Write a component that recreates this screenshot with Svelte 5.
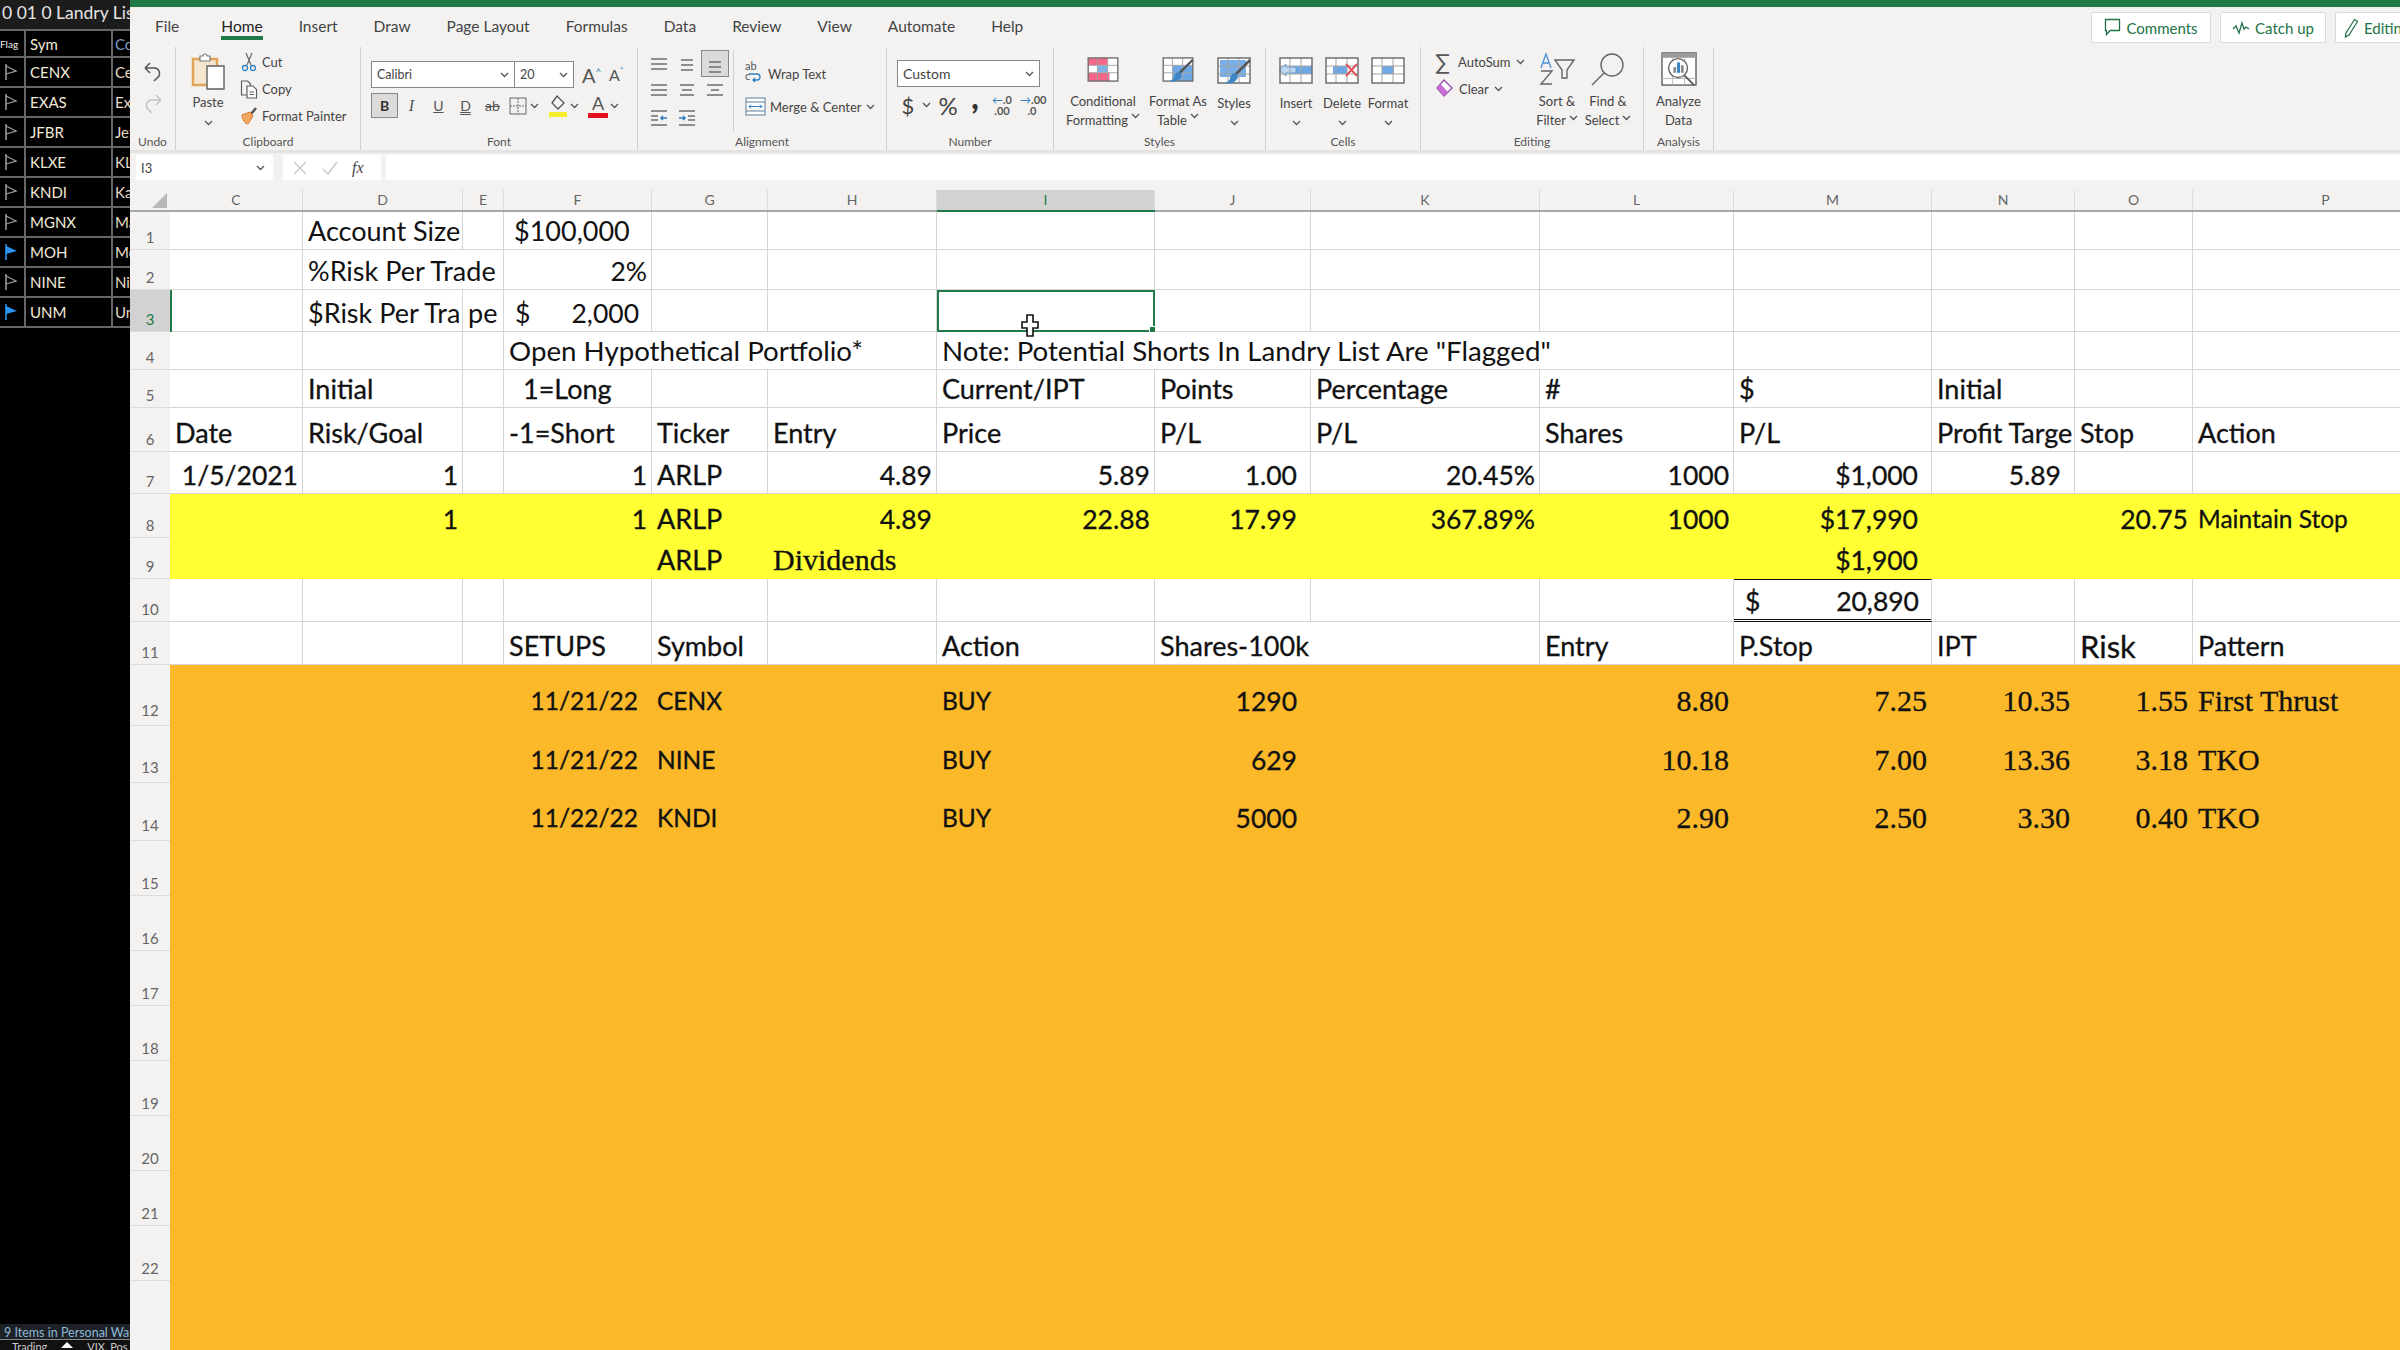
<script>
  const watch = [
    ["CENX", "Century", false],
    ["EXAS", "Exact", false],
    ["JFBR", "Jeffs", false],
    ["KLXE", "KLX", false],
    ["KNDI", "Kandi", false],
    ["MGNX", "Macro", false],
    ["MOH", "Molina", true],
    ["NINE", "Nine", false],
    ["UNM", "Unum", true],
  ];

  const tabs = ["File", "Home", "Insert", "Draw", "Page Layout", "Formulas", "Data", "Review", "View", "Automate", "Help"];
  const cols = "CDEFGHIJKLMNOP".split("");

  // cell helpers: left text, right text, accounting format
  const l = (t, cls = "", span = 1) => ({ t, cls, span });
  const r = (t, cls = "", span = 1) => ({ t, cls: "right " + cls, span });
  const acct = (t, cls = "") => ({ a: "$", t, cls: "acct " + cls, span: 1 });

  const rows = [
    { n: 1, h: 38, cells: { D: l("Account Size"), F: l("$100,000", "in") } },
    { n: 2, h: 40, cells: { D: l("%Risk Per Trade", "", 2), F: r("2%") } },
    { n: 3, h: 42, sel: true, cells: { D: l("$Risk Per Tra"), E: l("pe", "tight"), F: acct("2,000"), I: { t: "", cls: "active", span: 1 } } },
    { n: 4, h: 38, cells: { F: l("Open Hypothetical Portfolio*", "note", 3), I: l("Note: Potential Shorts In Landry List Are \"Flagged\"", "note", 4) } },
    { n: 5, h: 38, cls: "heavy", cells: { D: l("Initial"), F: l("1=Long", "in2"), I: l("Current/IPT"), J: l("Points"), K: l("Percentage"), L: l("#"), M: l("$"), N: l("Initial") } },
    { n: 6, h: 44, cls: "heavy", cells: { C: l("Date"), D: l("Risk/Goal"), F: l("-1=Short"), G: l("Ticker"), H: l("Entry"), I: l("Price"), J: l("P/L"), K: l("P/L"), L: l("Shares"), M: l("P/L"), N: l("Profit Targe"), O: l("Stop"), P: l("Action") } },
    { n: 7, h: 42, cls: "heavy", cells: { C: r("1/5/2021"), D: r("1"), F: r("1"), G: l("ARLP"), H: r("4.89"), I: r("5.89"), J: r("1.00", "pad"), K: r("20.45%"), L: r("1000"), M: r("$1,000", "pad"), N: r("5.89", "pad") } },
    { n: 8, h: 44, cls: "heavy yellow", cells: { D: r("1"), F: r("1"), G: l("ARLP"), H: r("4.89"), I: r("22.88"), J: r("17.99", "pad"), K: r("367.89%"), L: r("1000"), M: r("$17,990", "pad"), O: r("20.75"), P: l("Maintain Stop", "small") } },
    { n: 9, h: 41, cls: "heavy yellow", cells: { G: l("ARLP"), H: l("Dividends", "serif"), M: r("$1,900", "pad") } },
    { n: 10, h: 43, cls: "heavy", cells: { M: acct("20,890", "total") } },
    { n: 11, h: 43, cls: "heavy", cells: { F: l("SETUPS"), G: l("Symbol"), I: l("Action"), J: l("Shares-100k", "", 2), L: l("Entry"), M: l("P.Stop"), N: l("IPT"), O: l("Risk", "big"), P: l("Pattern") } },
    { n: 12, h: 61, cls: "heavy orange setup", cells: { F: r("11/21/22", "pad"), G: l("CENX"), I: l("BUY"), J: r("1290", "pad qty"), L: r("8.80", "serif"), M: r("7.25", "serif"), N: r("10.35", "serif"), O: r("1.55", "serif"), P: l("First Thrust", "serif") } },
    { n: 13, h: 57, cls: "heavy orange setup", cells: { F: r("11/21/22", "pad"), G: l("NINE"), I: l("BUY"), J: r("629", "pad qty"), L: r("10.18", "serif"), M: r("7.00", "serif"), N: r("13.36", "serif"), O: r("3.18", "serif"), P: l("TKO", "serif") } },
    { n: 14, h: 58, cls: "heavy orange setup", cells: { F: r("11/22/22", "pad"), G: l("KNDI"), I: l("BUY"), J: r("5000", "pad qty"), L: r("2.90", "serif"), M: r("2.50", "serif"), N: r("3.30", "serif"), O: r("0.40", "serif"), P: l("TKO", "serif") } },
    ...[15, 16, 17, 18, 19, 20, 21, 22].map((n) => ({ n, h: 55, cls: "orange", cells: {} })),
    { n: "", h: 71, cls: "orange last", cells: {} },
  ];

  // fill the gaps so every row has its full run of columns
  function expand(cells) {
    const out = [];
    for (let i = 0; i < cols.length; i++) {
      const c = cells[cols[i]] || { t: "", cls: "", span: 1 };
      out.push(c);
      i += c.span - 1;
    }
    return out;
  }
</script>

{#snippet chev()}
  <svg class="chev" width="9" height="6" viewBox="0 0 9 6"><path d="M1 1l3.500 3.500L8 1" fill="none" stroke="#555" stroke-width="1.300"/></svg>
{/snippet}

{#snippet lines(a, b, c, top)}
  <svg width="22" height="20" viewBox="0 0 22 20" fill="none" stroke="#6d6d6d" stroke-width="1.600">
    <path d="M{a} {top}H{22 - a}M{b} {top + 5}H{22 - b}M{c} {top + 10}H{22 - c}"/>
  </svg>
{/snippet}

{#snippet sheet(fill1, fill2)}
  <svg width="34" height="27" viewBox="0 0 34 27" fill="none">
    <rect x="1" y="1" width="32" height="25" fill="#fff"/>
    {@render fill1()}
    <path d="M1 9H33M1 17H33M11 1V26M22 1V26" stroke="#a5a5a5"/>
    <rect x="1" y="1" width="32" height="25" stroke="#6f6f6f" stroke-width="1.500"/>
    {#if fill2}{@render fill2()}{/if}
  </svg>
{/snippet}

{#snippet condFill()}
  <path d="M1 1h21v8H1zM1 17h23v9H1z" fill="#f4668a"/><path d="M11 9h11v8H11z" fill="#7fb2e5"/>
{/snippet}
{#snippet tableFill()}
  <path d="M11 9h22v17H11z" fill="#6ea8e4"/>
{/snippet}
{#snippet styleFill()}
  <path d="M3 3h26v17H3z" fill="#78aee8"/>
{/snippet}
{#snippet brush()}
  <path d="M33 3L18 18" stroke="#555" stroke-width="2.500"/><path d="M19 16c-4 0-6 3-6 6-1 2-3 3-5 4 5 1 11 0 13-6z" fill="#3f86c6"/>
{/snippet}
{#snippet insFill()}
  <path d="M11 9h22v8H11z" fill="#6ea8e4"/><path d="M0 13l7-6v3h10v6H7v3z" fill="#bcd8f2" stroke="#5a9bd8"/>
{/snippet}
{#snippet delFill()}
  <path d="M8 9h14v8H8z" fill="#6ea8e4"/>
{/snippet}
{#snippet delX()}
  <path d="M21 7l11 12M32 7L21 19" stroke="#e0515a" stroke-width="2"/>
{/snippet}
{#snippet fmtFill()}
  <path d="M11 9h12v8H11z" fill="#6ea8e4"/>
{/snippet}

<div class="screen">
  <aside class="watch">
    <div class="title">0 01 0 Landry List</div>
    <div class="wrow head"><span class="flag small-flag">Flag</span><span class="sym">Sym</span><span class="co blue">Company</span></div>
    {#each watch as [sym, co, on]}
      <div class="wrow">
        <span class="flag">
          <svg width="14" height="18" viewBox="0 0 14 18">
            <path d="M2 1v16" stroke={on ? "#2a95f0" : "#9a9a9a"} stroke-width="1.600"/>
            {#if on}<path d="M2 3l11 5-11 3z" fill="#2a95f0"/>{:else}<path d="M2 3l10 5-10 3" fill="none" stroke="#9a9a9a" stroke-width="1.300"/>{/if}
          </svg>
        </span>
        <span class="sym">{sym}</span>
        <span class="co">{co}</span>
      </div>
    {/each}
    <div class="spacer"></div>
    <div class="foot">9 Items in Personal Watchlist</div>
    <div class="foot2"><span>Trading</span><i></i><span>VIX, Pos</span></div>
  </aside>

  <main class="excel">
    <div class="greenbar"></div>
    <div class="tabs">
      {#each tabs as tab}
        <span class="tab" class:current={tab === "Home"} class:file={tab === "File"}>{tab}</span>
      {/each}
      <div class="actions">
        <button>
          <svg width="17" height="19" viewBox="0 0 17 19" fill="none" stroke="#217346" stroke-width="1.300"><path d="M1.500 1.500h14v11H6l-3.500 4v-4h-1z"/></svg>
          Comments
        </button>
        <button>
          <svg width="18" height="14" viewBox="0 0 18 14" fill="none" stroke="#217346" stroke-width="1.300"><path d="M1 8l3-3 3 7 3-10 2 6 2-2 3 2"/></svg>
          Catch up
        </button>
        <button class="edit">
          <svg width="15" height="20" viewBox="0 0 15 20" fill="none" stroke="#217346" stroke-width="1.200"><path d="M10.500 1.500l3 2L5 17l-3.500 2 .5-4z"/></svg>
          Editing
        </button>
      </div>
    </div>

    <div class="ribbon">
      <section class="group g-undo">
        <div class="body undo">
          <svg width="20" height="22" viewBox="0 0 20 22" fill="none" stroke="#555" stroke-width="1.500"><path d="M2 8h10a5.500 5.500 0 0 1 2 10l-3 3M2 8l5-5M2 8l5 5"/></svg>
          <svg width="20" height="22" viewBox="0 0 20 22" fill="none" stroke="#c4c4c4" stroke-width="1.500"><path d="M18 8H8a5.500 5.500 0 0 0-2 10l3 3M18 8l-5-5M18 8l-5 5"/></svg>
        </div>
        <div class="label">Undo</div>
      </section>

      <section class="group g-clip">
        <div class="body clip">
          <div class="paste">
            <svg width="34" height="38" viewBox="0 0 34 38" fill="none">
              <path d="M2 7h24v26H2z" fill="#f6e6d0" stroke="#e0a458" stroke-width="2.500"/>
              <path d="M9 7V4h3a2 2 0 0 1 4 0h3v5H9z" fill="#fff" stroke="#7b7b7b" stroke-width="1.200"/>
              <path d="M16 14h17v23H16z" fill="#fff" stroke="#5f5f5f" stroke-width="1.400"/>
            </svg>
            <span>Paste</span>
            {@render chev()}
          </div>
          <div class="cliplist">
            <div>
              <svg width="18" height="20" viewBox="0 0 18 20" fill="none"><path d="M6 1l5 12M12 1L7 13" stroke="#666" stroke-width="1.200"/><circle cx="5" cy="16" r="2.500" stroke="#2f7fc1" stroke-width="1.300"/><circle cx="13" cy="16" r="2.500" stroke="#2f7fc1" stroke-width="1.300"/></svg>
              Cut
            </div>
            <div>
              <svg width="18" height="20" viewBox="0 0 18 20" fill="none" stroke="#5f5f5f" stroke-width="1.200"><path d="M1.500 2h6l3 3v11h-9z"/><path d="M7 7h6l3.500 3.500V19H7z" fill="#fff"/><path d="M9.500 13h4.500M9.500 15.500h4.500"/></svg>
              Copy
            </div>
            <div>
              <svg width="18" height="20" viewBox="0 0 18 20" fill="none"><path d="M11 8l5-6" stroke="#555" stroke-width="2.500"/><path d="M2 9l8-3 3 4-5 8c-3 0-6-5-6-9z" fill="#f3a75f" stroke="#d9792b"/></svg>
              Format Painter
            </div>
          </div>
        </div>
        <div class="label">Clipboard</div>
      </section>

      <section class="group g-font">
        <div class="body font">
          <div class="fontrow">
            <div class="select name">Calibri {@render chev()}</div>
            <div class="select size">20 {@render chev()}</div>
            <span class="grow">A<sup>^</sup></span>
            <span class="grow shrink">A<sup>ˇ</sup></span>
          </div>
          <div class="fontrow second">
            <span class="bold">B</span>
            <span class="fb ital">I</span>
            <span class="fb und">U</span>
            <span class="fb dbl">D</span>
            <span class="fb strike">ab</span>
            <svg class="borders" width="18" height="18" viewBox="0 0 18 18" fill="none" stroke="#666"><rect x="1" y="1" width="16" height="16"/><path d="M9 1v16M1 9h16" stroke-dasharray="2 1"/></svg>
            {@render chev()}
            <svg class="fill" width="20" height="24" viewBox="0 0 20 24" fill="none"><path d="M9 2l7 7-6 6-6-6z" stroke="#555" stroke-width="1.300"/><path d="M1 18h18v5H1z" fill="#f7ee2f"/></svg>
            {@render chev()}
            <span class="fcolor">A</span>
            {@render chev()}
          </div>
        </div>
        <div class="label">Font</div>
      </section>

      <section class="group g-align">
        <div class="body align">
          <div class="aligns">
            <span>{@render lines(3, 3, 3, 5)}</span>
            <span>{@render lines(5, 5, 5, 6)}</span>
            <span class="on">{@render lines(5, 5, 5, 8)}</span>
            <span>{@render lines(3, 3, 3, 4)}</span>
            <span>{@render lines(4, 6, 4, 4)}</span>
            <span>{@render lines(3, 7, 3, 4)}</span>
            <span><svg width="22" height="20" viewBox="0 0 22 20" fill="none" stroke="#6d6d6d" stroke-width="1.500"><path d="M3 3h16M3 8h7M3 12h7M3 17h16"/><path d="M19 10h-6m2-2l-2 2 2 2" stroke="#2f7fc1"/></svg></span>
            <span><svg width="22" height="20" viewBox="0 0 22 20" fill="none" stroke="#6d6d6d" stroke-width="1.500"><path d="M3 3h16M12 8h7M12 12h7M3 17h16"/><path d="M3 10h6m-2-2l2 2-2 2" stroke="#2f7fc1"/></svg></span>
          </div>
          <div class="wraps">
            <div><svg width="19" height="20" viewBox="0 0 19 20" fill="none"><path d="M4 10h8a3 3 0 0 1 0 6H8m2-2l-2 2 2 2" stroke="#2f7fc1" stroke-width="1.300"/></svg><span class="abc">ab<br>c</span>Wrap Text</div>
            <div><svg width="21" height="19" viewBox="0 0 21 19" fill="none"><rect x="1" y="1" width="19" height="17" fill="#fff" stroke="#5f7d95"/><path d="M1 5h19M1 14h19" stroke="#5f7d95"/><path d="M4 9.500h13M6 7.500l-2 2 2 2M15 7.500l2 2-2 2" stroke="#2f7fc1"/></svg>Merge &amp; Center {@render chev()}</div>
          </div>
        </div>
        <div class="label">Alignment</div>
      </section>

      <section class="group g-num">
        <div class="body num">
          <div class="select custom">Custom {@render chev()}</div>
          <div class="numrow">
            <span class="dollar">$</span>
            {@render chev()}
            <span class="pct">%</span>
            <span class="comma">,</span>
            <span class="dec"><b class="ar">←</b>.0<br>.00</span>
            <span class="dec second"><b class="ar">→</b>.00<br>.0</span>
          </div>
        </div>
        <div class="label">Number</div>
      </section>

      <section class="group g-styles">
        <div class="body bigs">
          <div class="bigbtn w90">{@render sheet(condFill)}<span>Conditional</span><span>Formatting {@render chev()}</span></div>
          <div class="bigbtn w60">{@render sheet(tableFill, brush)}<span>Format As</span><span>Table {@render chev()}</span></div>
          <div class="bigbtn w52">{@render sheet(styleFill, brush)}<span>Styles</span>{@render chev()}</div>
        </div>
        <div class="label">Styles</div>
      </section>

      <section class="group g-cells">
        <div class="body bigs">
          <div class="bigbtn w46">{@render sheet(insFill)}<span>Insert</span>{@render chev()}</div>
          <div class="bigbtn w46">{@render sheet(delFill, delX)}<span>Delete</span>{@render chev()}</div>
          <div class="bigbtn w46">{@render sheet(fmtFill)}<span>Format</span>{@render chev()}</div>
        </div>
        <div class="label">Cells</div>
      </section>

      <section class="group g-edit">
        <div class="body edits">
          <div class="editlist">
            <div><span class="sigma">∑</span>AutoSum {@render chev()}</div>
            <div>
              <svg width="19" height="19" viewBox="0 0 19 19"><path d="M9 1l8 8-8 8-7-8z" fill="#fff" stroke="#9b4fb3" stroke-width="1.400"/><path d="M5.500 5L2 9l7 8 4-4z" fill="#c66fd6"/></svg>
              Clear {@render chev()}
            </div>
          </div>
          <div class="bigbtn w50 tall">
            <svg width="38" height="34" viewBox="0 0 38 34" fill="none"><path d="M3 16L8 2l5 14M5 11h6" stroke="#4c95d6" stroke-width="1.400"/><path d="M3 19h11L3 32h11" stroke="#666" stroke-width="1.400"/><path d="M17 8h19l-7 10v8h-5v-8z" stroke="#666" stroke-width="1.400"/></svg>
            <span>Sort &amp;</span><span>Filter {@render chev()}</span>
          </div>
          <div class="bigbtn w52 tall">
            <svg width="36" height="34" viewBox="0 0 36 34" fill="none" stroke="#666" stroke-width="1.400"><circle cx="22" cy="13" r="11"/><path d="M14 21L2 33"/></svg>
            <span>Find &amp;</span><span>Select {@render chev()}</span>
          </div>
        </div>
        <div class="label">Editing</div>
      </section>

      <section class="group g-ana">
        <div class="body bigs">
          <div class="bigbtn w70 tall">
            <svg width="38" height="36" viewBox="0 0 38 36" fill="none">
              <rect x="1" y="1" width="36" height="34" fill="#fff" stroke="#555" stroke-width="1.400"/>
              <path d="M1 1h36v5H1z" fill="#9a9a9a"/>
              <path d="M1 28h36M12 6v29M25 6v29" stroke="#b5b5b5"/>
              <circle cx="18" cy="17" r="10" fill="#fff" stroke="#666" stroke-width="1.500"/>
              <path d="M13 16h3v6h-3z" fill="#8a8a8a"/><path d="M17 11h3v11h-3z" fill="#2f7fc1"/><path d="M21 14h3v8h-3z" fill="#8a8a8a"/>
              <path d="M25 25l10 10" stroke="#555" stroke-width="1.800"/>
            </svg>
            <span>Analyze</span><span>Data</span>
          </div>
        </div>
        <div class="label">Analysis</div>
      </section>
    </div>

    <div class="formula">
      <div class="namebox">I3 {@render chev()}</div>
      <div class="fxbox">
        <svg width="16" height="16" viewBox="0 0 16 16" fill="none" stroke="#c8c8c8" stroke-width="1.400"><path d="M2 2l12 12M14 2L2 14"/></svg>
        <svg width="16" height="16" viewBox="0 0 16 16" fill="none" stroke="#c8c8c8" stroke-width="1.400"><path d="M1 9l5 5L15 2"/></svg>
        <span>fx</span>
      </div>
      <div class="input"></div>
    </div>

    <div class="sheetgrid">
      <div class="line colheads">
        <div class="corner"><i></i></div>
        {#each cols as c}<div class="colhead" class:sel={c === "I"}>{c}</div>{/each}
      </div>
      {#each rows as row}
        <div class="line {row.cls || ''}" style="height:{row.h}px">
          <div class="rowhead" class:sel={row.sel}>{row.n}</div>
          {#each expand(row.cells) as cell}
            <div class="cell {cell.cls}" style="grid-column:span {cell.span}">
              {#if cell.a}<span>{cell.a}</span>{/if}
              <span class="txt">{cell.t}</span>
              {#if cell.cls === "active"}
                <i class="handle"></i>
                <svg class="cursor" width="18" height="24" viewBox="0 0 18 24"><path d="M6 1h6v7h5v6h-5v8H6v-8H1V8h5z" fill="#fff" stroke="#111" stroke-width="1.600"/></svg>
              {/if}
            </div>
          {/each}
        </div>
      {/each}
    </div>
  </main>
</div>

<style>
  :global(body) { margin: 0; background: #000; overflow: hidden; }

  .screen { display: flex; width: 2400px; height: 1350px; overflow: hidden; font-family: Lato, "Liberation Sans", sans-serif; }

  /* watchlist */
  .watch { width: 130px; flex: none; background: #000; color: #eee; display: flex; flex-direction: column; overflow: hidden; white-space: nowrap; }
  .title { height: 29px; line-height: 26px; padding-left: 2px; background: #1c1c1c; font-size: 17.500px; color: #e4e4e4; }
  .wrow { display: grid; grid-template-columns: 26px 87px 17px; height: 30px; border-top: 2px solid #666; box-sizing: border-box; align-items: center; font-size: 15px; flex: none; }
  .wrow.head { height: 27px; }
  .wrow span { height: 100%; display: flex; align-items: center; overflow: hidden; }
  .flag { border-right: 2px solid #666; padding-left: 4px; box-sizing: border-box; }
  .small-flag { font-size: 10px; padding-left: 0; }
  .sym { border-right: 2px solid #666; padding-left: 4px; box-sizing: border-box; color: #f2ead8; }
  .co { padding-left: 2px; color: #e8dcc8; }
  .co.blue { color: #7f9cc0; }
  .spacer { flex: 1; border-top: 2px solid #666; }
  .foot { height: 15px; line-height: 17px; font-size: 12.500px; padding-left: 4px; background: #1e2226; color: #8db8d8; }
  .foot2 { height: 10px; border-top: 1px solid #888; background: #111; font-size: 11px; display: flex; gap: 14px; padding-left: 12px; color: #ccc; overflow: hidden; }
  .foot2 i { width: 0; height: 0; border: 6px solid transparent; border-bottom-color: #fff; margin-top: -4px; }

  /* excel chrome */
  .excel { flex: 1; min-width: 0; background: #f3f2f1; display: flex; flex-direction: column; color: #444; }
  .greenbar { height: 7px; background: #1f7a47; flex: none; }
  .tabs { height: 40px; flex: none; display: flex; gap: 36px; padding-left: 25px; font-size: 15.500px; align-items: flex-start; position: relative; overflow: hidden; }
  .tab { height: 33px; line-height: 38px; box-sizing: content-box; position: relative; color: #444; }
  .tab.file { margin-right: 6px; }
  .tab.current { color: #222; border-bottom: 4px solid #1f7a47; height: 29px; line-height: 38px; }
  .actions { margin-left: auto; margin-right: -35px; display: flex; gap: 9px; margin-top: 5px; }
  .actions button { height: 31px; padding: 0 8px; width: 120px; box-sizing: border-box; border: 1px solid #dcdad8; border-radius: 2px; background: #fff; color: #217346; font: 15px Lato, sans-serif; display: flex; align-items: center; gap: 5px; justify-content: center; }
  .actions button:nth-child(2) { width: 106px; }
  .actions .edit { width: 100px; justify-content: flex-start; }

  .ribbon { height: 106px; flex: none; display: flex; font-size: 13px; border-bottom: 3px solid #e4e3e1; box-sizing: border-box; }
  .group { box-sizing: border-box; border-right: 1px solid #d2d0ce; display: flex; flex-direction: column; height: 103px; }
  .g-undo { width: 46px; } .g-clip { width: 185px; } .g-font { width: 277px; } .g-align { width: 249px; }
  .g-num { width: 167px; } .g-styles { width: 212px; } .g-cells { width: 155px; } .g-edit { width: 223px; } .g-ana { width: 70px; }
  .body { flex: 1; display: flex; min-height: 0; }
  .label { height: 20px; line-height: 24px; text-align: center; font-size: 12px; color: #555; }
  .chev { flex: none; }

  .undo { flex-direction: column; align-items: center; padding-top: 13px; gap: 10px; }

  .paste { width: 64px; display: flex; flex-direction: column; align-items: center; padding-top: 5px; gap: 4px; }
  .paste .chev { margin-top: 6px; }
  .cliplist { display: flex; flex-direction: column; padding-top: 1px; }
  .cliplist div { height: 27px; display: flex; align-items: center; gap: 4px; }

  .font { flex-direction: column; padding: 14px 0 0 10px; }
  .fontrow { display: flex; align-items: center; height: 27px; }
  .fontrow.second { margin-top: 5px; height: 25px; }
  .select { height: 27px; box-sizing: border-box; background: #fff; border: 1px solid #8a8886; display: flex; align-items: center; justify-content: space-between; padding: 0 5px; font-size: 12.500px; }
  .select.name { width: 144px; }
  .select.size { width: 59px; border-left: 0; }
  .grow { font-size: 20px; margin-left: 8px; color: #555; width: 18px; }
  .grow.shrink { font-size: 16px; margin-left: 9px; }
  .grow sup { font-size: 10px; color: #2f7fc1; }
  .bold { width: 27px; height: 25px; box-sizing: border-box; background: #dcdbd9; border: 1px solid #8a8886; text-align: center; font-weight: 700; line-height: 23px; font-size: 14px; color: #333; }
  .fb { width: 27px; text-align: center; font-size: 14px; color: #555; }
  .fb.ital { font-family: "Liberation Serif", serif; font-style: italic; font-size: 16px; }
  .fb.und { text-decoration: underline; }
  .fb.dbl { text-decoration: underline double; }
  .fb.strike { text-decoration: line-through; }
  .borders { margin: 0 3px 0 3px; }
  .fill { margin: 0 2px 0 9px; }
  .fcolor { margin-left: 9px; width: 20px; text-align: center; font-size: 18px; line-height: 20px; border-bottom: 5px solid #e8101f; margin-right: 2px; color: #555; }

  .align { padding-left: 7px; }
  .aligns { width: 84px; height: 82px; margin-top: 3px; display: grid; grid-template-columns: repeat(3, 28px); grid-auto-rows: 27px; border-right: 1px solid #d2d0ce; padding-right: 4px; }
  .aligns span { display: flex; align-items: center; justify-content: center; box-sizing: border-box; }
  .aligns .on { background: #dcdbd9; border: 1px solid #8a8886; }
  .wraps { padding: 10px 0 0 11px; }
  .wraps div { height: 33px; display: flex; align-items: center; gap: 4px; position: relative; }
  .abc { position: absolute; left: 0; top: 4px; font-size: 11px; line-height: 10px; color: #555; }

  .num { flex-direction: column; padding: 13px 0 0 10px; }
  .select.custom { width: 143px; font-size: 14px; }
  .numrow { display: flex; align-items: center; height: 36px; }
  .dollar { font-size: 22px; width: 22px; text-align: center; }
  .numrow .chev { margin: 0 5px 0 3px; }
  .pct { font-size: 24px; width: 24px; text-align: center; }
  .comma { font-size: 32px; line-height: 20px; font-weight: 900; width: 30px; text-align: center; transform: translateY(-8px); color: #333; }
  .dec { font-size: 11px; line-height: 11px; width: 24px; font-weight: 700; text-align: center; color: #555; }
  .dec.second { margin-left: 6px; }
  .ar { color: #2f7fc1; font-weight: 400; }

  .bigs { padding-left: 4px; }
  .g-cells .bigs { padding-left: 7px; }
  .g-ana .bigs { padding-left: 0; }
  .bigbtn { display: flex; flex-direction: column; align-items: center; padding-top: 10px; }
  .bigbtn.tall { padding-top: 5px; }
  .bigbtn svg:first-child { margin-bottom: 10px; }
  .bigbtn.tall svg:first-child { margin-bottom: 6px; }
  .bigbtn span { line-height: 19px; white-space: nowrap; display: flex; align-items: center; gap: 3px; }
  .bigbtn > .chev { margin-top: 7px; }
  .w90 { width: 90px; } .w60 { width: 60px; } .w52 { width: 52px; } .w46 { width: 46px; } .w50 { width: 50px; } .w70 { width: 70px; }

  .edits { padding-left: 14px; }
  .editlist { width: 97px; padding-top: 1px; }
  .editlist div { height: 27px; display: flex; align-items: center; gap: 5px; }
  .sigma { font-size: 22px; width: 18px; color: #555; }

  .formula { height: 37px; flex: none; display: flex; padding: 2px 0 10px 6px; box-sizing: border-box; gap: 5px; font-size: 13px; }
  .namebox { width: 137px; background: #fff; display: flex; align-items: center; justify-content: space-between; padding: 0 8px 0 5px; box-sizing: border-box; }
  .fxbox { width: 98px; background: #fff; margin-left: 5px; display: flex; align-items: center; gap: 14px; padding-left: 9px; box-sizing: border-box; }
  .fxbox span { font: italic 16px "Liberation Serif", serif; color: #444; }
  .input { flex: 1; background: #fff; }

  /* sheet */
  .sheetgrid { flex: 1; min-height: 0; }
  .line { display: grid; grid-template-columns: 40px 133px 160px 41px 148px 116px 169px 218px 156px 229px 194px 198px 143px 118px 266px; background: #fff; color: #111; font-family: Lato, "Liberation Sans", sans-serif; }
  .colheads { height: 20px; background: #f3f2f1; border-bottom: 2px solid #a8a8a8; box-sizing: content-box; }
  .corner { position: relative; }
  .corner i { position: absolute; right: 3px; bottom: 2px; width: 0; height: 0; border-style: solid; border-width: 0 0 15px 15px; border-color: transparent transparent #b8b8b8 transparent; }
  .colhead { text-align: center; font-size: 14px; line-height: 20px; color: #666; border-right: 1px solid #dcdcdc; }
  .colhead.sel { background: #d2d2d2; color: #1f7a47; box-shadow: 0 2px 0 #1f7a47; }
  .rowhead { background: #f3f2f1; color: #666; font-size: 15px; display: flex; align-items: flex-end; justify-content: center; padding-bottom: 3px; box-sizing: border-box; border-bottom: 1px solid #dcdcdc; }
  .rowhead.sel { background: #d2d2d2; color: #1f7a47; box-shadow: 2px 0 0 #1f7a47; position: relative; }
  .setup .rowhead { padding-bottom: 6px; }

  .cell { box-sizing: border-box; display: flex; align-items: flex-end; min-width: 0; overflow: hidden; white-space: nowrap; padding: 0 4px 3px 5px; border-right: 1px solid #d6d6d6; border-bottom: 1px solid #d6d6d6; font-size: 27px; line-height: 30px; color: #111; }
  .right { justify-content: flex-end; font-size: 26.500px; }
  .right.pad { padding-right: 13px; }
  .in { padding-left: 10px; }
  .in2 { padding-left: 19px; }
  .note { font-size: 27.700px; }
  .tight { padding: 0 0 3px 5px; }
  .acct { justify-content: space-between; padding-left: 11px; padding-right: 12px; font-size: 26.500px; }
  .serif { font-family: "Liberation Serif", serif; font-size: 30px; }
  .small { font-size: 24.500px; }
  .big { font-size: 31px; }
  .heavy .cell { -webkit-text-stroke: 0.3px #111; }
  .total { border-top: 1px solid #111; border-bottom: 3px double #111; }
  .yellow .cell { background: #ffff33; border-color: #ffff33; }
  .orange .cell { background: #fbb829; border-color: #fbb829; }
  .setup .cell { align-items: center; padding-bottom: 0; padding-top: 12px; font-size: 24.500px; }
  .setup .cell.qty { font-size: 26.500px; }
  .setup .cell.serif { font-size: 30px; }
  .last .rowhead { border-bottom: 0; }

  .active { overflow: visible; position: relative; outline: 2px solid #1f7a47; outline-offset: -2px; }
  .handle { position: absolute; right: -2px; bottom: -2px; width: 5px; height: 5px; background: #1f7a47; border: 1px solid #fff; z-index: 1; }
  .cursor { position: absolute; left: 84px; bottom: -7px; z-index: 2; }
</style>
